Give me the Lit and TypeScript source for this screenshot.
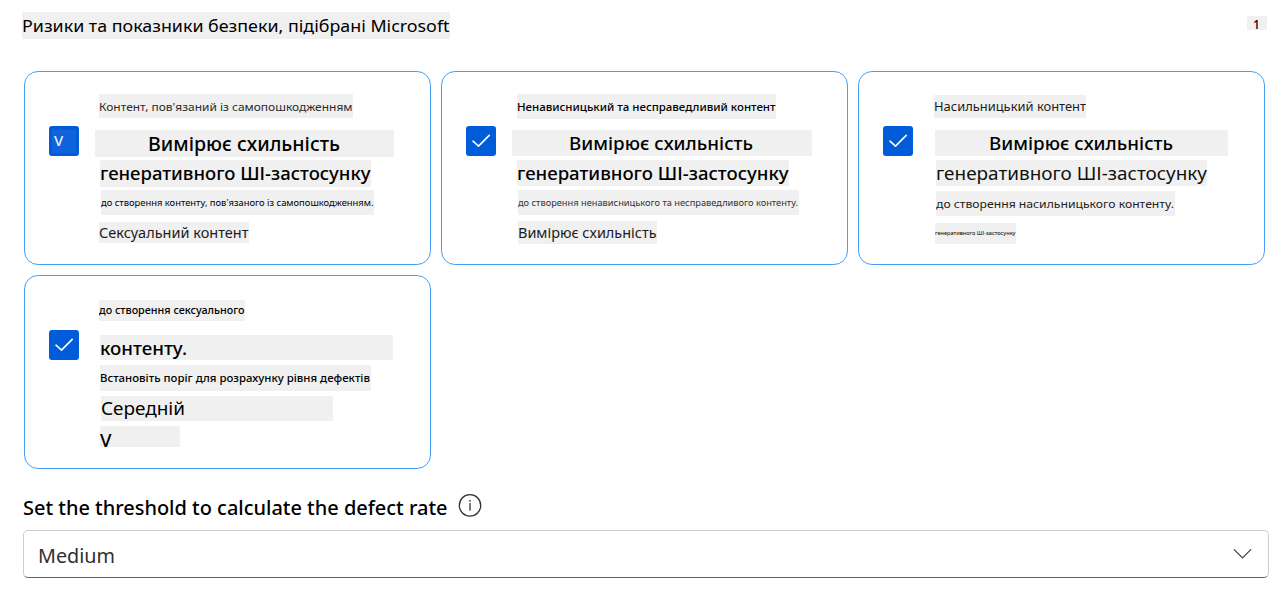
import { LitElement, html, css } from "lit";
import { customElement, property } from "lit/decorators.js";
import { styleMap } from "lit/directives/style-map.js";

interface Line {
  text: string;
  x: number; // strip left edge inside the card
  y: number; // strip top edge inside the card
  w: number;
  h: number;
  tx: number; // text start inside the strip
  tw: number; // text run width
  base: number; // baseline inside the strip
  size: number;
  weight?: number;
  color?: string;
}

/** A run of text fitted to a given width, on a strip of given size. */
@customElement("text-strip")
class TextStrip extends LitElement {
  @property({ attribute: false }) line!: Line;

  static styles = css`
    :host { display: block; flex: none; }
    .strip { display: block; overflow: visible; white-space: pre; }
    .run { display: inline-block; transform-origin: 0 50%; vertical-align: top; }
  `;

  updated() {
    const run = this.renderRoot.querySelector(".run") as HTMLElement;
    run.style.transform = "none";
    const natural = run.getBoundingClientRect().width;
    run.style.transform = `scaleX(${this.line.tw / natural})`;
  }

  render() {
    const l = this.line;
    const strip = { width: `${l.w}px`, height: `${l.h}px` };
    const run = {
      fontSize: `${l.size}px`,
      lineHeight: `${2 * (l.base - 0.388 * l.size)}px`,
      fontWeight: String(l.weight ?? 400),
      color: l.color ?? "#000",
      marginLeft: `${l.tx}px`,
    };
    return html`<div class="strip" style=${styleMap(strip)}><span class="run" style=${styleMap(run)}>${l.text}</span></div>`;
  }
}

@customElement("metric-card")
class MetricCard extends LitElement {
  @property({ attribute: false }) lines: Line[] = [];
  @property({ type: Boolean }) letter = false;

  static styles = css`
    :host {
      display: flex; box-sizing: border-box; height: 194px;
      border: 1px solid #479ef5; border-radius: 14px; background: #fff;
    }
    .check {
      flex: none; width: 30px; height: 30px; margin: 54px 0 0 24px;
      border-radius: 3px; background: #015cda; display: grid;
    }
    .check svg { display: block; }
    .patch {
      width: 24px; height: 23px; margin: 4px 0 0 3px; background: #1063dc;
      color: #e8f0fc; font-size: 15px; font-weight: 500; line-height: 21px; text-indent: 2px;
    }
    .body { display: flex; flex-direction: column; align-items: flex-start; width: 0; }
    .fill { background: #f0f0f0; }
  `;

  render() {
    let y = 1;
    return html`
      <div class="check">
        ${this.letter
          ? html`<div class="patch">V</div>`
          : html`<svg width="30" height="30" viewBox="0 0 30 30" fill="none">
              <path d="M7 15.2 L12.5 20.1 L23.2 9.4" stroke="#fff" stroke-width="1.6" stroke-linecap="round" stroke-linejoin="round" />
            </svg>`}
      </div>
      <div class="body">
        ${this.lines.map((l) => {
          const gap = l.y - y;
          y = l.y + l.h;
          return html`<text-strip class="fill" .line=${l}
            style=${styleMap({ marginTop: `${gap}px`, marginLeft: `${l.x - 55}px` })}></text-strip>`;
        })}
      </div>
    `;
  }
}

const measures = "Вимірює схильність";
const app = "генеративного ШІ-застосунку";

const cards: Line[][] = [
  [
    { text: "Контент, пов'язаний із самопошкодженням", x: 75, y: 23, w: 254, h: 24, tx: 0, tw: 253.5, base: 17, size: 11.5, color: "#2a2a2a" },
    { text: measures, x: 71, y: 59, w: 299, h: 27, tx: 53, tw: 192, base: 22, size: 19, weight: 500 },
    { text: app, x: 76, y: 89, w: 271, h: 27, tx: 0, tw: 270.5, base: 20.5, size: 18, weight: 500 },
    { text: "до створення контенту, пов'язаного із самопошкодженням.", x: 77, y: 119, w: 273, h: 25, tx: 0, tw: 272.5, base: 17, size: 9.5 },
    { text: "Сексуальний контент", x: 75, y: 151, w: 150, h: 21, tx: 0, tw: 149.5, base: 17, size: 13.5, color: "#1c1c1c" },
  ],
  [
    { text: "Ненависницький та несправедливий контент", x: 76, y: 23, w: 259, h: 25, tx: 0, tw: 258.5, base: 17, size: 11.5, weight: 500 },
    { text: measures, x: 71, y: 59, w: 300, h: 26, tx: 57, tw: 184, base: 20, size: 18.5, weight: 500 },
    { text: app, x: 76, y: 89, w: 272, h: 26, tx: 0, tw: 271.5, base: 20, size: 18, weight: 500 },
    { text: "до створення ненависницького та несправедливого контенту.", x: 77, y: 119, w: 281, h: 25, tx: 0, tw: 280, base: 16.5, size: 9, color: "#333" },
    { text: measures, x: 77, y: 150, w: 139, h: 23, tx: 0, tw: 138.5, base: 18, size: 13.5, color: "#1c1c1c" },
  ],
  [
    { text: "Насильницький контент", x: 76, y: 24, w: 152, h: 23, tx: 0, tw: 152, base: 17, size: 12, color: "#1c1c1c" },
    { text: measures, x: 77, y: 59, w: 293, h: 26, tx: 53.5, tw: 184, base: 20, size: 18.5, weight: 500 },
    { text: app, x: 78, y: 89, w: 271, h: 26, tx: 0, tw: 271, base: 20.5, size: 18, color: "#111" },
    { text: "до створення насильницького контенту.", x: 78, y: 120, w: 239, h: 25, tx: 0, tw: 238, base: 17, size: 11.5, color: "#222" },
    { text: app, x: 77, y: 152, w: 81, h: 21, tx: 0, tw: 80.5, base: 13, size: 5.5 },
  ],
  [
    { text: "до створення сексуального", x: 75, y: 25, w: 146, h: 21, tx: 0, tw: 145.5, base: 15, size: 10.5, weight: 500 },
    { text: "контенту.", x: 76, y: 60, w: 293, h: 25, tx: 0, tw: 87, base: 20, size: 17.5, weight: 500 },
    { text: "Встановіть поріг для розрахунку рівня дефектів", x: 76, y: 90, w: 271, h: 26, tx: 0, tw: 270, base: 17, size: 11, weight: 500 },
    { text: "Середній", x: 77, y: 121, w: 232, h: 25, tx: 0, tw: 84, base: 19.5, size: 17.5 },
    { text: "V", x: 76, y: 151, w: 80, h: 21, tx: 0, tw: 11.5, base: 21, size: 18, weight: 500 },
  ],
];

const heading: Line = { text: "Ризики та показники безпеки, підібрані Microsoft", x: 0, y: 0, w: 428, h: 27, tx: 0, tw: 427.5, base: 21, size: 16 };
const count: Line = { text: "1", x: 0, y: 0, w: 20, h: 14, tx: 6, tw: 7, base: 14, size: 12, weight: 500 };
const label: Line = { text: "Set the threshold to calculate the defect rate", x: 0, y: 0, w: 424, h: 30, tx: 0, tw: 424.5, base: 23, size: 20, weight: 500 };
const value: Line = { text: "Medium", x: 0, y: 0, w: 80, h: 30, tx: 0, tw: 77, base: 22, size: 20.5, color: "#303030" };

@customElement("app-root")
class AppRoot extends LitElement {
  static styles = css`
    :host {
      display: block; box-sizing: border-box; height: 591px; overflow: hidden;
      background: #fff; font-family: "Noto Sans", "Open Sans", sans-serif;
    }
    .head { display: flex; justify-content: space-between; align-items: flex-start; padding: 12px 12px 0 22px; height: 59px; }
    .fill { background: #f0f0f0; }
    .count { margin-top: 4px; }
    .grid { display: grid; grid-template-columns: repeat(3, 407px); gap: 10px; padding-left: 24px; }
    .label { display: flex; align-items: flex-start; padding: 24px 0 0 23px; height: 37px; }
    .label svg { display: block; margin-left: 11px; }
    .select {
      display: flex; justify-content: space-between; align-items: flex-start; box-sizing: border-box;
      width: 1246px; height: 48px; margin-left: 23px; padding: 10px 16px 0 14px;
      border: 1px solid #cecece; border-bottom-color: #616161; border-radius: 5px;
    }
    .select svg { display: block; margin-top: 7px; }
  `;

  render() {
    return html`
      <div class="head">
        <text-strip class="fill" .line=${heading}></text-strip>
        <text-strip class="fill count" .line=${count}></text-strip>
      </div>
      <div class="grid">
        ${cards.map((lines, i) => html`<metric-card .lines=${lines} ?letter=${i === 0}></metric-card>`)}
      </div>
      <div class="label">
        <text-strip .line=${label}></text-strip>
        <svg width="24" height="24" viewBox="0 0 24 24" fill="none">
          <circle cx="12" cy="12.4" r="10.7" stroke="#333" stroke-width="1.3" />
          <circle cx="12" cy="7.8" r="0.9" fill="#333" />
          <path d="M12 10.6 V17.2" stroke="#333" stroke-width="1.3" stroke-linecap="round" />
        </svg>
      </div>
      <div class="select">
        <text-strip .line=${value}></text-strip>
        <svg width="19" height="14" viewBox="0 0 19 14" fill="none">
          <path d="M1.2 1.6 L9.5 9.9 L17.8 1.6" stroke="#444" stroke-width="1.3" stroke-linecap="round" stroke-linejoin="round" />
        </svg>
      </div>
    `;
  }
}
